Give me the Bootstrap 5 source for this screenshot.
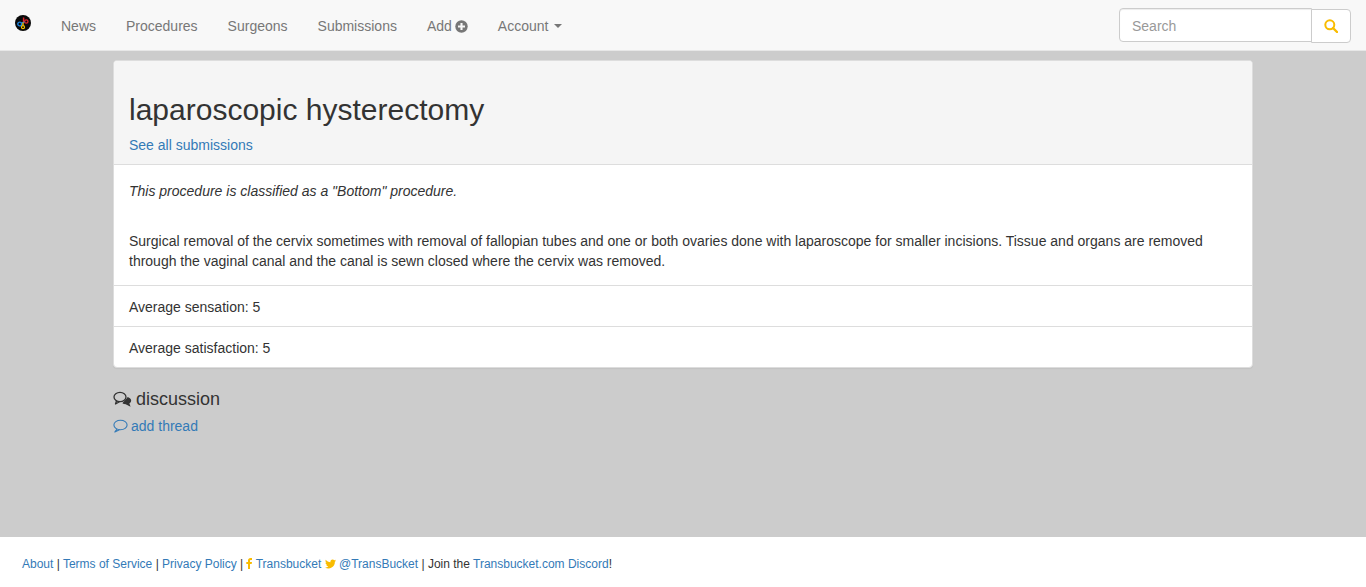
<!DOCTYPE html>
<html lang="en">
<head>
<meta charset="utf-8">
<title>laparoscopic hysterectomy</title>
<link href="https://cdn.jsdelivr.net/npm/bootstrap@5.3.0/dist/css/bootstrap.min.css" rel="stylesheet">
<style>
html,body{height:587px;overflow:hidden}
body{background:#ccc;color:#333;font:14px/20px "Liberation Sans",Arial,sans-serif;display:flex;flex-direction:column}
a{color:#337ab7;text-decoration:none}
.tb-nav{background:#f8f8f8;border-bottom:1px solid #e7e7e7;height:51px;padding:0;flex:none;flex-wrap:nowrap}
.tb-brand{padding:0 15px 5px;display:flex;height:50px;align-items:center;margin-right:0}
.tb-nav .nav-link{color:#777;padding:16px 15px 14px;font-size:14px;line-height:20px;display:flex;align-items:center;white-space:nowrap}
.tb-nav .nav-link svg{margin-left:3px}
.tb-caret{display:inline-block;margin-left:6px;border-top:4px solid #777;border-left:4px solid transparent;border-right:4px solid transparent}
.tb-search{width:232px;margin-right:15px;margin-top:1px}
.tb-input{width:193px;height:34px;border:1px solid #ccc;border-radius:4px 0 0 4px;padding:7px 12px 5px;font-size:14px;line-height:20px;box-shadow:inset 0 1px 1px rgba(0,0,0,.075);background:#fff}
.tb-input::placeholder{color:#999;opacity:1}
.tb-btn{width:40px;height:34px;margin-top:1px;margin-left:-1px;background:#fff;border:1px solid #ccc;border-radius:0 4px 4px 0;padding:0;display:flex;align-items:center;justify-content:center}
.tb-main{flex:1 1 auto;width:1140px;margin:9px auto 0}
.tb-panel{border:1px solid #ddd;border-radius:4px;box-shadow:0 1px 1px rgba(0,0,0,.05);background:#fff;overflow:hidden}
.tb-head{background:#f5f5f5;border-bottom:1px solid #ddd;padding:32px 15px 9px}
.tb-head h1{font:500 30px/33px "Liberation Sans",Arial,sans-serif;margin:0 0 9px;color:#333}
.tb-body{padding:16px 15px 14px;border-bottom:1px solid #ddd}
.tb-body p{margin:0}
.tb-body p+p{margin-top:30px}
.tb-row{padding:11px 15px 9px;height:41px;border-bottom:1px solid #ddd}
.tb-row:last-child{border-bottom:0;height:40px}
.tb-disc{font:500 18px/20px "Liberation Sans",Arial,sans-serif;margin:21px 0 7px;display:flex;align-items:center;gap:4px;color:#333}
.tb-add{display:inline-flex;align-items:center;gap:3px}
.tb-foot{background:#fff;height:50px;flex:none;padding:17px 22px 0;font-size:12px;line-height:20px}
.tb-foot svg{vertical-align:-1px}
.tb-fb{margin:0 1px 0 -1px}
</style>
</head>
<body>
<nav class="navbar tb-nav">
  <div class="d-flex align-items-center">
    <a class="tb-brand" href="#" aria-label="Transbucket">
      <svg width="16" height="16" viewBox="0 0 16 16"><circle cx="8" cy="8" r="8" fill="#0a0a0a"/><path d="M8.600 2.500v5" stroke="#e0262c" stroke-width="1.500"/><circle cx="11.300" cy="6.500" r="1.700" fill="none" stroke="#e0262c" stroke-width="1.300"/><circle cx="4.700" cy="9" r="1.900" fill="none" stroke="#1d84e0" stroke-width="1.400"/><path d="M6 8.300 9.500 7" stroke="#1d84e0" stroke-width="1.300"/><circle cx="8" cy="12.200" r="1.500" fill="none" stroke="#f5c400" stroke-width="1.200"/><path d="M8 7.500v3" stroke="#f5c400" stroke-width="1.400"/></svg>
    </a>
    <ul class="nav">
      <li class="nav-item"><a class="nav-link" href="#">News</a></li>
      <li class="nav-item"><a class="nav-link" href="#">Procedures</a></li>
      <li class="nav-item"><a class="nav-link" href="#">Surgeons</a></li>
      <li class="nav-item"><a class="nav-link" href="#">Submissions</a></li>
      <li class="nav-item"><a class="nav-link" href="#">Add<svg width="13" height="13" viewBox="0 0 13 13"><circle cx="6.500" cy="6.500" r="6.200" fill="#777"/><path d="M6.500 3v7M3 6.500h7" stroke="#f8f8f8" stroke-width="2.100"/></svg></a></li>
      <li class="nav-item"><a class="nav-link" href="#">Account<span class="tb-caret"></span></a></li>
    </ul>
  </div>
  <form class="d-flex tb-search">
    <input class="tb-input" type="text" placeholder="Search" aria-label="Search">
    <button class="tb-btn" type="button" aria-label="Search"><svg width="14" height="14" viewBox="0 0 14 14" fill="none" stroke="#f9bc00"><circle cx="5.800" cy="5.800" r="4.500" stroke-width="2"/><path d="M9 9l4 4" stroke-width="2.400" stroke-linecap="round"/></svg></button>
  </form>
</nav>
<main class="tb-main">
  <section class="tb-panel">
    <header class="tb-head">
      <h1>laparoscopic hysterectomy</h1>
      <a href="#">See all submissions</a>
    </header>
    <div class="tb-body">
      <p><em>This procedure is classified as a "Bottom" procedure.</em></p>
      <p>Surgical removal of the cervix sometimes with removal of fallopian tubes and one or both ovaries done with laparoscope for smaller incisions. Tissue and organs are removed through the vaginal canal and the canal is sewn closed where the cervix was removed.</p>
    </div>
    <div class="tb-row">Average sensation: 5</div>
    <div class="tb-row">Average satisfaction: 5</div>
  </section>
  <h2 class="tb-disc"><svg width="19" height="16" viewBox="0 0 19 16" fill="none" stroke="#333" stroke-width="1.300"><ellipse cx="7" cy="6" rx="6" ry="4.700"/><path d="M3.500 9.800 2.500 13l4-2.200" stroke-linejoin="round"/><path d="M14.500 6.500c2.500 1 3.300 2.600 2.900 3.900-.3.900-1 1.500-1.800 1.900l.8 2.200-3.400-1.800c-1.300 0-2.400-.3-3.200-.9" fill="#333"/></svg>discussion</h2>
  <a class="tb-add" href="#"><svg width="15" height="14" viewBox="0 0 15 14" fill="none" stroke="#337ab7" stroke-width="1.100"><ellipse cx="7.500" cy="6" rx="6.600" ry="4.700"/><path d="M4 10 1.800 13 6.500 10.800" stroke-linejoin="round"/></svg>add thread</a>
</main>
<footer class="tb-foot">
  <a href="#">About</a> | <a href="#">Terms of Service</a> | <a href="#">Privacy Policy</a> | <svg class="tb-fb" width="6" height="11" viewBox="0 0 6 11"><path d="M2 11V6H.3V4H2V2.600C2 .9 3 0 4.400 0H6v2H4.900C4.200 2 4 2.300 4 3v1h2l-.3 2H4v5z" fill="#f9bc00"/></svg> <a href="#">Transbucket</a> <svg width="11" height="10" viewBox="0 0 24 20"><path d="M24 2.400c-.9.4-1.800.7-2.800.8 1-.6 1.800-1.600 2.200-2.700-1 .6-2 1-3.100 1.200A4.900 4.900 0 0 0 11.900 6.100C7.800 5.900 4.200 3.900 1.700.9c-1.300 2.200-.7 5.100 1.500 6.600-.8 0-1.600-.2-2.200-.6 0 2.300 1.600 4.400 3.900 4.900-.7.200-1.500.2-2.200.1.600 2 2.400 3.400 4.600 3.400A9.900 9.900 0 0 1 0 17.400 14 14 0 0 0 21.500 5c1-.7 1.900-1.600 2.500-2.600z" fill="#f9bc00"/></svg> <a href="#">@TransBucket</a> | Join the <a href="#">Transbucket.com Discord</a>!
</footer>
</body>
</html>
